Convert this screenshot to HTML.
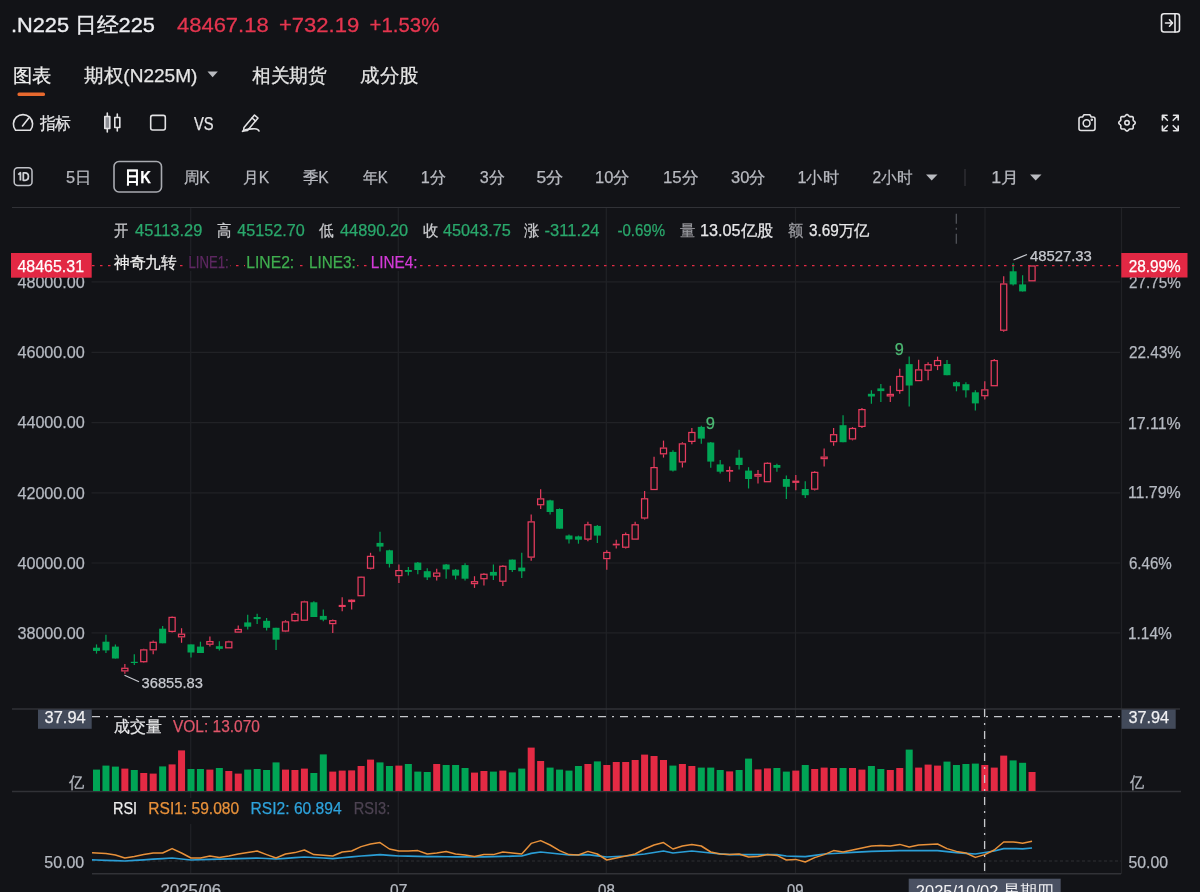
<!DOCTYPE html><html><head><meta charset="utf-8"><style>html,body{margin:0;padding:0;background:#121317;width:1200px;height:892px;overflow:hidden}svg{display:block;font-family:"Liberation Sans",sans-serif;will-change:transform}</style></head><body>
<svg width="1200" height="892" viewBox="0 0 1200 892">
<rect width="1200" height="892" fill="#121317"/>
<text x="10.93" y="32" font-size="21" fill="#ecedf0" font-weight="normal" textLength="143.99" lengthAdjust="spacingAndGlyphs"  stroke="#ecedf0" stroke-width="0.35">.N225 日经225</text>
<text x="177.00" y="32" font-size="21" fill="#e5354f" font-weight="normal" textLength="91.62" lengthAdjust="spacingAndGlyphs"  stroke="#e5354f" stroke-width="0.3">48467.18</text>
<text x="278.95" y="32" font-size="21" fill="#e5354f" font-weight="normal" textLength="80.33" lengthAdjust="spacingAndGlyphs"  stroke="#e5354f" stroke-width="0.3">+732.19</text>
<text x="369.53" y="32" font-size="21" fill="#e5354f" font-weight="normal" textLength="69.79" lengthAdjust="spacingAndGlyphs"  stroke="#e5354f" stroke-width="0.3">+1.53%</text>
<g fill="none" stroke="#e8e8ea" stroke-width="1.6" stroke-linecap="round" stroke-linejoin="round">
<rect x="1161.5" y="13.8" width="18" height="18.2" rx="2.5"/>
<line x1="1175" y1="14" x2="1175" y2="32"/>
<line x1="1165.5" y1="23" x2="1172" y2="23"/><polyline points="1169.5,19.8 1172.5,23 1169.5,26.2"/>
</g>
<text x="12.58" y="81.5" font-size="18.5" fill="#eeeeee" font-weight="normal" textLength="38.63" lengthAdjust="spacingAndGlyphs" stroke="#eeeeee" stroke-width="0.25" >图表</text>
<text x="84.20" y="81.5" font-size="18.5" fill="#e6e6e6" font-weight="normal" textLength="113.20" lengthAdjust="spacingAndGlyphs" stroke="#e6e6e6" stroke-width="0.25" >期权(N225M)</text>
<polygon points="207.5,71.5 217.8,71.5 212.6,77.3" fill="#b9bbc0"/>
<text x="252.00" y="81.5" font-size="18.5" fill="#e6e6e6" font-weight="normal" textLength="74.90" lengthAdjust="spacingAndGlyphs" stroke="#e6e6e6" stroke-width="0.25" >相关期货</text>
<text x="360.28" y="81.5" font-size="18.5" fill="#e6e6e6" font-weight="normal" textLength="58.35" lengthAdjust="spacingAndGlyphs" stroke="#e6e6e6" stroke-width="0.25" >成分股</text>
<rect x="17.5" y="92.6" width="27.5" height="3.4" rx="1.5" fill="#e8692e"/>
<g fill="none" stroke="#e2e2e4" stroke-width="1.6" stroke-linecap="round" stroke-linejoin="round">
<path d="M15.6,130.3 L30.4,130.3 A9.6,9.6 0 1 0 15.6,130.3 Z"/>
<line x1="22.5" y1="126" x2="28.8" y2="118"/>
<line x1="107.3" y1="113" x2="107.3" y2="132"/><rect x="104.8" y="116.5" width="5" height="12" fill="#8e9096"/>
<line x1="117.3" y1="114" x2="117.3" y2="131"/><rect x="114.8" y="117.5" width="5" height="10" fill="#121317"/>
<rect x="150.7" y="115.4" width="14.6" height="14.6" rx="2"/>
<path d="M244,127.5 L254.5,115 L258,118 L247.5,130.5 L243.5,131 Z"/><line x1="252" y1="118" x2="255.5" y2="121"/>
<path d="M242.5,131.3 C246,128.5 251,129 254,128.8 C257,128.6 258.5,129.8 259,131"/>
</g>
<text x="39.50" y="128.8" font-size="16.5" fill="#e6e6e8" font-weight="normal" textLength="31.50" lengthAdjust="spacingAndGlyphs" stroke="#e6e6e8" stroke-width="0.25" >指标</text>
<text x="193.90" y="129.7" font-size="19" fill="#e6e6e8" font-weight="normal" textLength="19.68" lengthAdjust="spacingAndGlyphs" stroke="#e6e6e8" stroke-width="0.25" >VS</text>
<g fill="none" stroke="#e2e2e4" stroke-width="1.6" stroke-linecap="round" stroke-linejoin="round">
<path d="M1079,119 Q1079,117 1081,117 L1082.5,117 L1084,114.8 L1089.8,114.8 L1091.3,117 L1093,117 Q1095,117 1095,119 L1095,128.5 Q1095,130.5 1093,130.5 L1081,130.5 Q1079,130.5 1079,128.5 Z"/>
<circle cx="1086.6" cy="123.2" r="3.4"/>
<circle cx="1091.8" cy="119.8" r="0.5" fill="#e2e2e4"/>
<polygon points="1135.25,122.80 1135.17,123.23 1134.96,123.64 1134.64,124.01 1134.26,124.34 1133.88,124.64 1133.56,124.93 1133.32,125.22 1133.18,125.55 1133.14,125.93 1133.17,126.36 1133.22,126.84 1133.26,127.34 1133.22,127.84 1133.08,128.28 1132.83,128.63 1132.48,128.88 1132.04,129.02 1131.54,129.06 1131.04,129.02 1130.56,128.97 1130.13,128.94 1129.75,128.98 1129.42,129.12 1129.13,129.36 1128.84,129.68 1128.54,130.06 1128.21,130.44 1127.84,130.76 1127.43,130.97 1127.00,131.05 1126.57,130.97 1126.16,130.76 1125.79,130.44 1125.46,130.06 1125.16,129.68 1124.87,129.36 1124.58,129.12 1124.25,128.98 1123.87,128.94 1123.44,128.97 1122.96,129.02 1122.46,129.06 1121.96,129.02 1121.52,128.88 1121.17,128.63 1120.92,128.28 1120.78,127.84 1120.74,127.34 1120.78,126.84 1120.83,126.36 1120.86,125.93 1120.82,125.55 1120.68,125.22 1120.44,124.93 1120.12,124.64 1119.74,124.34 1119.36,124.01 1119.04,123.64 1118.83,123.23 1118.75,122.80 1118.83,122.37 1119.04,121.96 1119.36,121.59 1119.74,121.26 1120.12,120.96 1120.44,120.67 1120.68,120.38 1120.82,120.05 1120.86,119.67 1120.83,119.24 1120.78,118.76 1120.74,118.26 1120.78,117.76 1120.92,117.32 1121.17,116.97 1121.52,116.72 1121.96,116.58 1122.46,116.54 1122.96,116.58 1123.44,116.63 1123.87,116.66 1124.25,116.62 1124.58,116.48 1124.87,116.24 1125.16,115.92 1125.46,115.54 1125.79,115.16 1126.16,114.84 1126.57,114.63 1127.00,114.55 1127.43,114.63 1127.84,114.84 1128.21,115.16 1128.54,115.54 1128.84,115.92 1129.13,116.24 1129.42,116.48 1129.75,116.62 1130.13,116.66 1130.56,116.63 1131.04,116.58 1131.54,116.54 1132.04,116.58 1132.48,116.72 1132.83,116.97 1133.08,117.32 1133.22,117.76 1133.26,118.26 1133.22,118.76 1133.17,119.24 1133.14,119.67 1133.18,120.05 1133.32,120.38 1133.56,120.67 1133.88,120.96 1134.26,121.26 1134.64,121.59 1134.96,121.96 1135.17,122.37 1135.25,122.80"/>
<circle cx="1127" cy="122.8" r="2.2"/>
<path d="M1162.4,115.3 L1167.4,120.3 M1162.4,115.3 L1162.4,120 M1162.4,115.3 L1167.1,115.3"/>
<path d="M1178.2,115.3 L1173.2,120.3 M1178.2,115.3 L1178.2,120 M1178.2,115.3 L1173.5,115.3"/>
<path d="M1162.4,130.7 L1167.4,125.7 M1162.4,130.7 L1162.4,126 M1162.4,130.7 L1167.1,130.7"/>
<path d="M1178.2,130.7 L1173.2,125.7 M1178.2,130.7 L1178.2,126 M1178.2,130.7 L1173.5,130.7"/>
</g>
<rect x="14.2" y="167.8" width="17.8" height="17.8" rx="3.5" fill="none" stroke="#c0c2c8" stroke-width="1.5"/>
<g fill="none" stroke="#cfd1d6" stroke-width="1.8" stroke-linejoin="round"><path d="M18.2,174.6 L20.4,172.8 L20.4,180.4"/><path d="M23.3,172.9 L25.1,172.9 Q28.4,172.9 28.4,176.6 Q28.4,180.3 25.1,180.3 L23.3,180.3 Z"/></g>
<text x="65.98" y="182.6" font-size="16" fill="#b8bac0" font-weight="normal" textLength="25.47" lengthAdjust="spacingAndGlyphs" stroke="#b8bac0" stroke-width="0.25" >5日</text>
<text x="183.52" y="182.6" font-size="16" fill="#b8bac0" font-weight="normal" textLength="26.16" lengthAdjust="spacingAndGlyphs" stroke="#b8bac0" stroke-width="0.25" >周K</text>
<text x="243.02" y="182.6" font-size="16" fill="#b8bac0" font-weight="normal" textLength="26.16" lengthAdjust="spacingAndGlyphs" stroke="#b8bac0" stroke-width="0.25" >月K</text>
<text x="302.70" y="182.6" font-size="16" fill="#b8bac0" font-weight="normal" textLength="25.98" lengthAdjust="spacingAndGlyphs" stroke="#b8bac0" stroke-width="0.25" >季K</text>
<text x="362.70" y="182.6" font-size="16" fill="#b8bac0" font-weight="normal" textLength="24.99" lengthAdjust="spacingAndGlyphs" stroke="#b8bac0" stroke-width="0.25" >年K</text>
<text x="420.69" y="182.6" font-size="16" fill="#b8bac0" font-weight="normal" textLength="25.23" lengthAdjust="spacingAndGlyphs" stroke="#b8bac0" stroke-width="0.25" >1分</text>
<text x="479.80" y="182.6" font-size="16" fill="#b8bac0" font-weight="normal" textLength="25.11" lengthAdjust="spacingAndGlyphs" stroke="#b8bac0" stroke-width="0.25" >3分</text>
<text x="536.61" y="182.6" font-size="16" fill="#b8bac0" font-weight="normal" textLength="27.07" lengthAdjust="spacingAndGlyphs" stroke="#b8bac0" stroke-width="0.25" >5分</text>
<text x="594.97" y="182.6" font-size="16" fill="#b8bac0" font-weight="normal" textLength="34.85" lengthAdjust="spacingAndGlyphs" stroke="#b8bac0" stroke-width="0.25" >10分</text>
<text x="662.95" y="182.6" font-size="16" fill="#b8bac0" font-weight="normal" textLength="35.38" lengthAdjust="spacingAndGlyphs" stroke="#b8bac0" stroke-width="0.25" >15分</text>
<text x="731.00" y="182.6" font-size="16" fill="#b8bac0" font-weight="normal" textLength="34.82" lengthAdjust="spacingAndGlyphs" stroke="#b8bac0" stroke-width="0.25" >30分</text>
<text x="797.49" y="182.6" font-size="16" fill="#b8bac0" font-weight="normal" textLength="41.42" lengthAdjust="spacingAndGlyphs" stroke="#b8bac0" stroke-width="0.25" >1小时</text>
<text x="872.50" y="182.6" font-size="16" fill="#b8bac0" font-weight="normal" textLength="39.91" lengthAdjust="spacingAndGlyphs" stroke="#b8bac0" stroke-width="0.25" >2小时</text>
<text x="991.38" y="182.6" font-size="16" fill="#b8bac0" font-weight="normal" textLength="27.87" lengthAdjust="spacingAndGlyphs" stroke="#b8bac0" stroke-width="0.25" >1月</text>
<rect x="114" y="161.5" width="47.5" height="30.5" rx="5" fill="none" stroke="#a9abb1" stroke-width="1.6"/>
<text x="125.22" y="183" font-size="16.5" fill="#ffffff" font-weight="bold" textLength="25.71" lengthAdjust="spacingAndGlyphs" stroke="#ffffff" stroke-width="0.25" >日K</text>
<polygon points="926,174.5 937.5,174.5 931.7,180.5" fill="#b9bbc0"/>
<polygon points="1030,174.5 1041.5,174.5 1035.7,180.5" fill="#b9bbc0"/>
<line x1="965" y1="169" x2="965" y2="186" stroke="#3a3b40" stroke-width="1"/>
<line x1="12" y1="207.5" x2="1180" y2="207.5" stroke="#313237" stroke-width="1.2"/>
<line x1="91.5" y1="281.8" x2="1120" y2="281.8" stroke="#212226" stroke-width="1.2"/>
<line x1="91.5" y1="352.4" x2="1120" y2="352.4" stroke="#212226" stroke-width="1.2"/>
<line x1="91.5" y1="422.6" x2="1120" y2="422.6" stroke="#212226" stroke-width="1.2"/>
<line x1="91.5" y1="492.8" x2="1120" y2="492.8" stroke="#212226" stroke-width="1.2"/>
<line x1="91.5" y1="563" x2="1120" y2="563" stroke="#212226" stroke-width="1.2"/>
<line x1="91.5" y1="632.9" x2="1120" y2="632.9" stroke="#212226" stroke-width="1.2"/>
<line x1="190.7" y1="208" x2="190.7" y2="874" stroke="#212226" stroke-width="1.2"/>
<line x1="398.3" y1="208" x2="398.3" y2="874" stroke="#212226" stroke-width="1.2"/>
<line x1="606.3" y1="208" x2="606.3" y2="874" stroke="#212226" stroke-width="1.2"/>
<line x1="795.5" y1="208" x2="795.5" y2="874" stroke="#212226" stroke-width="1.2"/>
<line x1="985" y1="208" x2="985" y2="874" stroke="#212226" stroke-width="1.2"/>
<line x1="1121.5" y1="208" x2="1121.5" y2="874" stroke="#212226" stroke-width="1.2"/>
<line x1="12" y1="709" x2="1180" y2="709" stroke="#313237" stroke-width="1.5"/>
<line x1="12" y1="791.5" x2="1181" y2="791.5" stroke="#313237" stroke-width="1.5"/>
<line x1="92" y1="873.8" x2="1121" y2="873.8" stroke="#313237" stroke-width="1.5"/>
<text x="17.40" y="288" font-size="16" fill="#b5b9c1" font-weight="normal" textLength="67.44" lengthAdjust="spacingAndGlyphs" stroke="#b5b9c1" stroke-width="0.25" >48000.00</text>
<text x="17.40" y="358.1" font-size="16" fill="#b5b9c1" font-weight="normal" textLength="67.44" lengthAdjust="spacingAndGlyphs" stroke="#b5b9c1" stroke-width="0.25" >46000.00</text>
<text x="17.40" y="428.3" font-size="16" fill="#b5b9c1" font-weight="normal" textLength="67.44" lengthAdjust="spacingAndGlyphs" stroke="#b5b9c1" stroke-width="0.25" >44000.00</text>
<text x="17.40" y="498.6" font-size="16" fill="#b5b9c1" font-weight="normal" textLength="67.44" lengthAdjust="spacingAndGlyphs" stroke="#b5b9c1" stroke-width="0.25" >42000.00</text>
<text x="17.40" y="569" font-size="16" fill="#b5b9c1" font-weight="normal" textLength="67.44" lengthAdjust="spacingAndGlyphs" stroke="#b5b9c1" stroke-width="0.25" >40000.00</text>
<text x="17.40" y="639.1" font-size="16" fill="#b5b9c1" font-weight="normal" textLength="67.44" lengthAdjust="spacingAndGlyphs" stroke="#b5b9c1" stroke-width="0.25" >38000.00</text>
<text x="1128.90" y="288" font-size="16" fill="#b5b9c1" font-weight="normal" textLength="51.85" lengthAdjust="spacingAndGlyphs" stroke="#b5b9c1" stroke-width="0.25" >27.75%</text>
<text x="1128.90" y="358.3" font-size="16" fill="#b5b9c1" font-weight="normal" textLength="52.05" lengthAdjust="spacingAndGlyphs" stroke="#b5b9c1" stroke-width="0.25" >22.43%</text>
<text x="1127.90" y="429" font-size="16" fill="#b5b9c1" font-weight="normal" textLength="52.87" lengthAdjust="spacingAndGlyphs" stroke="#b5b9c1" stroke-width="0.25" >17.11%</text>
<text x="1127.90" y="498.3" font-size="16" fill="#b5b9c1" font-weight="normal" textLength="52.87" lengthAdjust="spacingAndGlyphs" stroke="#b5b9c1" stroke-width="0.25" >11.79%</text>
<text x="1128.90" y="568.6" font-size="16" fill="#b5b9c1" font-weight="normal" textLength="42.95" lengthAdjust="spacingAndGlyphs" stroke="#b5b9c1" stroke-width="0.25" >6.46%</text>
<text x="1127.93" y="639" font-size="16" fill="#b5b9c1" font-weight="normal" textLength="43.93" lengthAdjust="spacingAndGlyphs" stroke="#b5b9c1" stroke-width="0.25" >1.14%</text>
<line x1="96.50" y1="644.4" x2="96.50" y2="653.6" stroke="#00a555" stroke-width="1.2"/>
<rect x="93.00" y="647.7" width="7" height="3.20" fill="#00a555"/>
<line x1="105.95" y1="634.7" x2="105.95" y2="653.0" stroke="#00a555" stroke-width="1.2"/>
<rect x="102.45" y="641.7" width="7" height="8.70" fill="#00a555"/>
<line x1="115.40" y1="644.4" x2="115.40" y2="658.5" stroke="#00a555" stroke-width="1.2"/>
<rect x="111.90" y="646.6" width="7" height="11.90" fill="#00a555"/>
<line x1="124.85" y1="663.9" x2="124.85" y2="667.7" stroke="#e63c5e" stroke-width="1.2"/>
<line x1="124.85" y1="671.5" x2="124.85" y2="673.7" stroke="#e63c5e" stroke-width="1.2"/>
<rect x="121.80" y="668.30" width="6.1" height="2.60" fill="none" stroke="#e63c5e" stroke-width="1.25"/>
<line x1="134.30" y1="654.2" x2="134.30" y2="665.0" stroke="#00a555" stroke-width="1.2"/>
<rect x="130.80" y="661.8" width="7" height="1.20" fill="#00a555"/>
<line x1="143.75" y1="648.8" x2="143.75" y2="649.3" stroke="#e63c5e" stroke-width="1.2"/>
<line x1="143.75" y1="662.3" x2="143.75" y2="662.8" stroke="#e63c5e" stroke-width="1.2"/>
<rect x="140.70" y="649.90" width="6.1" height="11.80" fill="none" stroke="#e63c5e" stroke-width="1.25"/>
<line x1="153.20" y1="640.6" x2="153.20" y2="641.7" stroke="#e63c5e" stroke-width="1.2"/>
<line x1="153.20" y1="650.4" x2="153.20" y2="654.2" stroke="#e63c5e" stroke-width="1.2"/>
<rect x="150.15" y="642.30" width="6.1" height="7.50" fill="none" stroke="#e63c5e" stroke-width="1.25"/>
<line x1="162.65" y1="626.0" x2="162.65" y2="643.3" stroke="#00a555" stroke-width="1.2"/>
<rect x="159.15" y="628.7" width="7" height="14.60" fill="#00a555"/>
<line x1="172.10" y1="616.3" x2="172.10" y2="616.8" stroke="#e63c5e" stroke-width="1.2"/>
<line x1="172.10" y1="632.0" x2="172.10" y2="632.5" stroke="#e63c5e" stroke-width="1.2"/>
<rect x="169.05" y="617.40" width="6.1" height="14.00" fill="none" stroke="#e63c5e" stroke-width="1.25"/>
<line x1="181.55" y1="628.2" x2="181.55" y2="633.6" stroke="#e63c5e" stroke-width="1.2"/>
<line x1="181.55" y1="637.4" x2="181.55" y2="642.8" stroke="#e63c5e" stroke-width="1.2"/>
<rect x="178.50" y="634.20" width="6.1" height="2.60" fill="none" stroke="#e63c5e" stroke-width="1.25"/>
<line x1="191.00" y1="644.4" x2="191.00" y2="657.4" stroke="#00a555" stroke-width="1.2"/>
<rect x="187.50" y="644.4" width="7" height="8.10" fill="#00a555"/>
<line x1="200.45" y1="641.7" x2="200.45" y2="653.0" stroke="#00a555" stroke-width="1.2"/>
<rect x="196.95" y="646.6" width="7" height="6.40" fill="#00a555"/>
<line x1="209.90" y1="636.6" x2="209.90" y2="641.0" stroke="#e63c5e" stroke-width="1.2"/>
<line x1="209.90" y1="644.8" x2="209.90" y2="646.4" stroke="#e63c5e" stroke-width="1.2"/>
<rect x="206.85" y="641.60" width="6.1" height="2.60" fill="none" stroke="#e63c5e" stroke-width="1.25"/>
<line x1="219.35" y1="641.3" x2="219.35" y2="650.5" stroke="#00a555" stroke-width="1.2"/>
<rect x="215.85" y="646.2" width="7" height="2.70" fill="#00a555"/>
<line x1="228.80" y1="640.8" x2="228.80" y2="641.3" stroke="#e63c5e" stroke-width="1.2"/>
<rect x="225.75" y="641.90" width="6.1" height="5.90" fill="none" stroke="#e63c5e" stroke-width="1.25"/>
<line x1="238.25" y1="625.6" x2="238.25" y2="628.9" stroke="#e63c5e" stroke-width="1.2"/>
<rect x="235.20" y="629.50" width="6.1" height="2.60" fill="none" stroke="#e63c5e" stroke-width="1.25"/>
<line x1="247.70" y1="614.8" x2="247.70" y2="629.4" stroke="#00a555" stroke-width="1.2"/>
<rect x="244.20" y="622.4" width="7" height="4.30" fill="#00a555"/>
<line x1="257.15" y1="613.7" x2="257.15" y2="624.0" stroke="#00a555" stroke-width="1.2"/>
<rect x="253.65" y="617.0" width="7" height="2.10" fill="#00a555"/>
<line x1="266.60" y1="618.0" x2="266.60" y2="630.5" stroke="#00a555" stroke-width="1.2"/>
<rect x="263.10" y="620.8" width="7" height="7.00" fill="#00a555"/>
<line x1="276.05" y1="627.8" x2="276.05" y2="650.0" stroke="#00a555" stroke-width="1.2"/>
<rect x="272.55" y="627.8" width="7" height="11.90" fill="#00a555"/>
<line x1="285.50" y1="620.2" x2="285.50" y2="621.3" stroke="#e63c5e" stroke-width="1.2"/>
<line x1="285.50" y1="631.6" x2="285.50" y2="632.1" stroke="#e63c5e" stroke-width="1.2"/>
<rect x="282.45" y="621.90" width="6.1" height="9.10" fill="none" stroke="#e63c5e" stroke-width="1.25"/>
<line x1="294.95" y1="612.1" x2="294.95" y2="613.7" stroke="#e63c5e" stroke-width="1.2"/>
<line x1="294.95" y1="621.3" x2="294.95" y2="621.8" stroke="#e63c5e" stroke-width="1.2"/>
<rect x="291.90" y="614.30" width="6.1" height="6.40" fill="none" stroke="#e63c5e" stroke-width="1.25"/>
<line x1="304.40" y1="600.7" x2="304.40" y2="601.3" stroke="#e63c5e" stroke-width="1.2"/>
<rect x="301.35" y="601.90" width="6.1" height="18.30" fill="none" stroke="#e63c5e" stroke-width="1.25"/>
<line x1="313.85" y1="601.3" x2="313.85" y2="617.0" stroke="#00a555" stroke-width="1.2"/>
<rect x="310.35" y="602.3" width="7" height="14.70" fill="#00a555"/>
<line x1="323.30" y1="609.4" x2="323.30" y2="621.3" stroke="#00a555" stroke-width="1.2"/>
<rect x="319.80" y="615.9" width="7" height="3.80" fill="#00a555"/>
<line x1="332.75" y1="619.5" x2="332.75" y2="620.1" stroke="#e63c5e" stroke-width="1.2"/>
<line x1="332.75" y1="624.2" x2="332.75" y2="633.0" stroke="#e63c5e" stroke-width="1.2"/>
<rect x="329.70" y="620.70" width="6.1" height="2.90" fill="none" stroke="#e63c5e" stroke-width="1.25"/>
<line x1="342.20" y1="597.2" x2="342.20" y2="604.9" stroke="#e63c5e" stroke-width="1.2"/>
<line x1="342.20" y1="607.0" x2="342.20" y2="611.3" stroke="#e63c5e" stroke-width="1.2"/>
<rect x="338.70" y="604.9" width="7" height="2.10" fill="#e63c5e"/>
<line x1="351.65" y1="599.0" x2="351.65" y2="599.6" stroke="#e63c5e" stroke-width="1.2"/>
<line x1="351.65" y1="602.1" x2="351.65" y2="609.5" stroke="#e63c5e" stroke-width="1.2"/>
<rect x="348.15" y="599.6" width="7" height="2.50" fill="#e63c5e"/>
<line x1="361.10" y1="576.2" x2="361.10" y2="576.6" stroke="#e63c5e" stroke-width="1.2"/>
<rect x="358.05" y="577.20" width="6.1" height="18.50" fill="none" stroke="#e63c5e" stroke-width="1.25"/>
<line x1="370.55" y1="552.8" x2="370.55" y2="555.8" stroke="#e63c5e" stroke-width="1.2"/>
<line x1="370.55" y1="568.8" x2="370.55" y2="569.4" stroke="#e63c5e" stroke-width="1.2"/>
<rect x="367.50" y="556.40" width="6.1" height="11.80" fill="none" stroke="#e63c5e" stroke-width="1.25"/>
<line x1="380.00" y1="531.8" x2="380.00" y2="551.5" stroke="#00a555" stroke-width="1.2"/>
<rect x="376.50" y="542.9" width="7" height="3.70" fill="#00a555"/>
<line x1="389.45" y1="549.7" x2="389.45" y2="567.5" stroke="#00a555" stroke-width="1.2"/>
<rect x="385.95" y="550.3" width="7" height="13.60" fill="#00a555"/>
<line x1="398.90" y1="564.5" x2="398.90" y2="570.0" stroke="#e63c5e" stroke-width="1.2"/>
<line x1="398.90" y1="576.2" x2="398.90" y2="583.0" stroke="#e63c5e" stroke-width="1.2"/>
<rect x="395.85" y="570.60" width="6.1" height="5.00" fill="none" stroke="#e63c5e" stroke-width="1.25"/>
<line x1="408.35" y1="567.0" x2="408.35" y2="575.6" stroke="#00a555" stroke-width="1.2"/>
<rect x="404.85" y="570.0" width="7" height="1.90" fill="#00a555"/>
<line x1="417.80" y1="562.0" x2="417.80" y2="574.3" stroke="#00a555" stroke-width="1.2"/>
<rect x="414.30" y="562.6" width="7" height="7.40" fill="#00a555"/>
<line x1="427.25" y1="568.2" x2="427.25" y2="579.9" stroke="#00a555" stroke-width="1.2"/>
<rect x="423.75" y="571.2" width="7" height="6.20" fill="#00a555"/>
<line x1="436.70" y1="568.8" x2="436.70" y2="572.5" stroke="#e63c5e" stroke-width="1.2"/>
<line x1="436.70" y1="576.8" x2="436.70" y2="580.5" stroke="#e63c5e" stroke-width="1.2"/>
<rect x="433.65" y="573.10" width="6.1" height="3.10" fill="none" stroke="#e63c5e" stroke-width="1.25"/>
<line x1="446.15" y1="563.9" x2="446.15" y2="578.7" stroke="#00a555" stroke-width="1.2"/>
<rect x="442.65" y="564.5" width="7" height="4.90" fill="#00a555"/>
<line x1="455.60" y1="569.0" x2="455.60" y2="579.6" stroke="#00a555" stroke-width="1.2"/>
<rect x="452.10" y="569.7" width="7" height="5.90" fill="#00a555"/>
<line x1="465.05" y1="563.3" x2="465.05" y2="580.5" stroke="#00a555" stroke-width="1.2"/>
<rect x="461.55" y="565.1" width="7" height="13.60" fill="#00a555"/>
<line x1="474.50" y1="576.2" x2="474.50" y2="581.1" stroke="#e63c5e" stroke-width="1.2"/>
<line x1="474.50" y1="584.2" x2="474.50" y2="587.9" stroke="#e63c5e" stroke-width="1.2"/>
<rect x="471.45" y="581.70" width="6.1" height="1.90" fill="none" stroke="#e63c5e" stroke-width="1.25"/>
<line x1="483.95" y1="573.1" x2="483.95" y2="573.7" stroke="#e63c5e" stroke-width="1.2"/>
<line x1="483.95" y1="579.3" x2="483.95" y2="585.4" stroke="#e63c5e" stroke-width="1.2"/>
<rect x="480.90" y="574.30" width="6.1" height="4.40" fill="none" stroke="#e63c5e" stroke-width="1.25"/>
<line x1="493.40" y1="564.5" x2="493.40" y2="579.9" stroke="#00a555" stroke-width="1.2"/>
<rect x="489.90" y="571.9" width="7" height="3.70" fill="#00a555"/>
<line x1="502.85" y1="565.1" x2="502.85" y2="565.7" stroke="#e63c5e" stroke-width="1.2"/>
<line x1="502.85" y1="581.8" x2="502.85" y2="586.1" stroke="#e63c5e" stroke-width="1.2"/>
<rect x="499.80" y="566.30" width="6.1" height="14.90" fill="none" stroke="#e63c5e" stroke-width="1.25"/>
<line x1="512.30" y1="559.6" x2="512.30" y2="571.9" stroke="#00a555" stroke-width="1.2"/>
<rect x="508.80" y="559.6" width="7" height="10.40" fill="#00a555"/>
<line x1="521.75" y1="552.8" x2="521.75" y2="578.0" stroke="#00a555" stroke-width="1.2"/>
<rect x="518.25" y="567.6" width="7" height="3.70" fill="#00a555"/>
<line x1="531.20" y1="514.5" x2="531.20" y2="521.3" stroke="#e63c5e" stroke-width="1.2"/>
<line x1="531.20" y1="557.7" x2="531.20" y2="560.8" stroke="#e63c5e" stroke-width="1.2"/>
<rect x="528.15" y="521.90" width="6.1" height="35.20" fill="none" stroke="#e63c5e" stroke-width="1.25"/>
<line x1="540.65" y1="489.2" x2="540.65" y2="498.3" stroke="#e63c5e" stroke-width="1.2"/>
<line x1="540.65" y1="505.3" x2="540.65" y2="509.0" stroke="#e63c5e" stroke-width="1.2"/>
<rect x="537.60" y="498.90" width="6.1" height="5.80" fill="none" stroke="#e63c5e" stroke-width="1.25"/>
<line x1="550.10" y1="499.7" x2="550.10" y2="514.5" stroke="#00a555" stroke-width="1.2"/>
<rect x="546.60" y="500.4" width="7" height="11.60" fill="#00a555"/>
<line x1="559.55" y1="508.4" x2="559.55" y2="528.7" stroke="#00a555" stroke-width="1.2"/>
<rect x="556.05" y="509.0" width="7" height="19.70" fill="#00a555"/>
<line x1="569.00" y1="534.5" x2="569.00" y2="543.6" stroke="#00a555" stroke-width="1.2"/>
<rect x="565.50" y="535.5" width="7" height="3.90" fill="#00a555"/>
<line x1="578.45" y1="535.6" x2="578.45" y2="543.7" stroke="#00a555" stroke-width="1.2"/>
<rect x="574.95" y="536.4" width="7" height="3.30" fill="#00a555"/>
<line x1="587.90" y1="521.8" x2="587.90" y2="524.2" stroke="#e63c5e" stroke-width="1.2"/>
<line x1="587.90" y1="539.7" x2="587.90" y2="541.3" stroke="#e63c5e" stroke-width="1.2"/>
<rect x="584.85" y="524.80" width="6.1" height="14.30" fill="none" stroke="#e63c5e" stroke-width="1.25"/>
<line x1="597.35" y1="525.0" x2="597.35" y2="543.0" stroke="#00a555" stroke-width="1.2"/>
<rect x="593.85" y="525.9" width="7" height="9.70" fill="#00a555"/>
<line x1="606.80" y1="550.2" x2="606.80" y2="551.9" stroke="#e63c5e" stroke-width="1.2"/>
<line x1="606.80" y1="559.2" x2="606.80" y2="569.7" stroke="#e63c5e" stroke-width="1.2"/>
<rect x="603.75" y="552.50" width="6.1" height="6.10" fill="none" stroke="#e63c5e" stroke-width="1.25"/>
<line x1="616.25" y1="539.7" x2="616.25" y2="543.7" stroke="#e63c5e" stroke-width="1.2"/>
<line x1="616.25" y1="545.4" x2="616.25" y2="548.6" stroke="#e63c5e" stroke-width="1.2"/>
<rect x="612.75" y="543.7" width="7" height="1.70" fill="#e63c5e"/>
<line x1="625.70" y1="532.4" x2="625.70" y2="534.0" stroke="#e63c5e" stroke-width="1.2"/>
<line x1="625.70" y1="547.8" x2="625.70" y2="548.6" stroke="#e63c5e" stroke-width="1.2"/>
<rect x="622.65" y="534.60" width="6.1" height="12.60" fill="none" stroke="#e63c5e" stroke-width="1.25"/>
<line x1="635.15" y1="521.8" x2="635.15" y2="524.2" stroke="#e63c5e" stroke-width="1.2"/>
<rect x="632.10" y="524.80" width="6.1" height="14.30" fill="none" stroke="#e63c5e" stroke-width="1.25"/>
<line x1="644.60" y1="490.9" x2="644.60" y2="498.2" stroke="#e63c5e" stroke-width="1.2"/>
<line x1="644.60" y1="518.6" x2="644.60" y2="519.4" stroke="#e63c5e" stroke-width="1.2"/>
<rect x="641.55" y="498.80" width="6.1" height="19.20" fill="none" stroke="#e63c5e" stroke-width="1.25"/>
<line x1="654.05" y1="456.8" x2="654.05" y2="467.0" stroke="#e63c5e" stroke-width="1.2"/>
<rect x="651.00" y="467.60" width="6.1" height="21.90" fill="none" stroke="#e63c5e" stroke-width="1.25"/>
<line x1="663.50" y1="440.6" x2="663.50" y2="447.5" stroke="#e63c5e" stroke-width="1.2"/>
<line x1="663.50" y1="454.4" x2="663.50" y2="457.6" stroke="#e63c5e" stroke-width="1.2"/>
<rect x="660.45" y="448.10" width="6.1" height="5.70" fill="none" stroke="#e63c5e" stroke-width="1.25"/>
<line x1="672.95" y1="450.3" x2="672.95" y2="471.4" stroke="#00a555" stroke-width="1.2"/>
<rect x="669.45" y="451.9" width="7" height="18.70" fill="#00a555"/>
<line x1="682.40" y1="442.2" x2="682.40" y2="443.3" stroke="#e63c5e" stroke-width="1.2"/>
<line x1="682.40" y1="462.5" x2="682.40" y2="467.4" stroke="#e63c5e" stroke-width="1.2"/>
<rect x="679.35" y="443.90" width="6.1" height="18.00" fill="none" stroke="#e63c5e" stroke-width="1.25"/>
<line x1="691.85" y1="428.0" x2="691.85" y2="431.9" stroke="#e63c5e" stroke-width="1.2"/>
<line x1="691.85" y1="442.0" x2="691.85" y2="444.2" stroke="#e63c5e" stroke-width="1.2"/>
<rect x="688.80" y="432.50" width="6.1" height="8.90" fill="none" stroke="#e63c5e" stroke-width="1.25"/>
<line x1="701.30" y1="425.7" x2="701.30" y2="443.7" stroke="#00a555" stroke-width="1.2"/>
<rect x="697.80" y="426.9" width="7" height="11.70" fill="#00a555"/>
<line x1="710.75" y1="442.0" x2="710.75" y2="467.8" stroke="#00a555" stroke-width="1.2"/>
<rect x="707.25" y="442.5" width="7" height="19.10" fill="#00a555"/>
<line x1="720.20" y1="459.9" x2="720.20" y2="473.4" stroke="#00a555" stroke-width="1.2"/>
<rect x="716.70" y="464.4" width="7" height="7.30" fill="#00a555"/>
<line x1="729.65" y1="466.6" x2="729.65" y2="470.0" stroke="#e63c5e" stroke-width="1.2"/>
<line x1="729.65" y1="471.7" x2="729.65" y2="481.8" stroke="#e63c5e" stroke-width="1.2"/>
<rect x="726.15" y="470.0" width="7" height="1.70" fill="#e63c5e"/>
<line x1="739.10" y1="449.8" x2="739.10" y2="469.4" stroke="#00a555" stroke-width="1.2"/>
<rect x="735.60" y="457.7" width="7" height="7.30" fill="#00a555"/>
<line x1="748.55" y1="467.2" x2="748.55" y2="488.5" stroke="#00a555" stroke-width="1.2"/>
<rect x="745.05" y="470.6" width="7" height="8.40" fill="#00a555"/>
<line x1="758.00" y1="470.0" x2="758.00" y2="473.9" stroke="#e63c5e" stroke-width="1.2"/>
<line x1="758.00" y1="476.7" x2="758.00" y2="483.4" stroke="#e63c5e" stroke-width="1.2"/>
<rect x="754.95" y="474.50" width="6.1" height="1.60" fill="none" stroke="#e63c5e" stroke-width="1.25"/>
<line x1="767.45" y1="462.2" x2="767.45" y2="462.7" stroke="#e63c5e" stroke-width="1.2"/>
<rect x="764.40" y="463.30" width="6.1" height="18.40" fill="none" stroke="#e63c5e" stroke-width="1.25"/>
<line x1="776.90" y1="463.8" x2="776.90" y2="471.7" stroke="#00a555" stroke-width="1.2"/>
<rect x="773.40" y="465.0" width="7" height="2.80" fill="#00a555"/>
<line x1="786.35" y1="475.6" x2="786.35" y2="499.1" stroke="#00a555" stroke-width="1.2"/>
<rect x="782.85" y="479.0" width="7" height="7.80" fill="#00a555"/>
<line x1="795.80" y1="475.0" x2="795.80" y2="480.6" stroke="#e63c5e" stroke-width="1.2"/>
<line x1="795.80" y1="482.9" x2="795.80" y2="490.2" stroke="#e63c5e" stroke-width="1.2"/>
<rect x="792.30" y="480.6" width="7" height="2.30" fill="#e63c5e"/>
<line x1="805.25" y1="481.2" x2="805.25" y2="498.0" stroke="#00a555" stroke-width="1.2"/>
<rect x="801.75" y="489.0" width="7" height="6.20" fill="#00a555"/>
<line x1="814.70" y1="470.9" x2="814.70" y2="471.8" stroke="#e63c5e" stroke-width="1.2"/>
<line x1="814.70" y1="489.7" x2="814.70" y2="490.6" stroke="#e63c5e" stroke-width="1.2"/>
<rect x="811.65" y="472.40" width="6.1" height="16.70" fill="none" stroke="#e63c5e" stroke-width="1.25"/>
<line x1="824.15" y1="448.5" x2="824.15" y2="456.5" stroke="#e63c5e" stroke-width="1.2"/>
<line x1="824.15" y1="459.2" x2="824.15" y2="466.4" stroke="#e63c5e" stroke-width="1.2"/>
<rect x="821.10" y="457.10" width="6.1" height="1.50" fill="none" stroke="#e63c5e" stroke-width="1.25"/>
<line x1="833.60" y1="427.9" x2="833.60" y2="434.1" stroke="#e63c5e" stroke-width="1.2"/>
<line x1="833.60" y1="442.2" x2="833.60" y2="445.8" stroke="#e63c5e" stroke-width="1.2"/>
<rect x="830.55" y="434.70" width="6.1" height="6.90" fill="none" stroke="#e63c5e" stroke-width="1.25"/>
<line x1="843.05" y1="415.3" x2="843.05" y2="442.2" stroke="#00a555" stroke-width="1.2"/>
<rect x="839.55" y="425.2" width="7" height="17.00" fill="#00a555"/>
<line x1="852.50" y1="427.0" x2="852.50" y2="427.9" stroke="#e63c5e" stroke-width="1.2"/>
<line x1="852.50" y1="439.5" x2="852.50" y2="440.4" stroke="#e63c5e" stroke-width="1.2"/>
<rect x="849.45" y="428.50" width="6.1" height="10.40" fill="none" stroke="#e63c5e" stroke-width="1.25"/>
<line x1="861.95" y1="408.1" x2="861.95" y2="409.0" stroke="#e63c5e" stroke-width="1.2"/>
<line x1="861.95" y1="427.0" x2="861.95" y2="427.9" stroke="#e63c5e" stroke-width="1.2"/>
<rect x="858.90" y="409.60" width="6.1" height="16.80" fill="none" stroke="#e63c5e" stroke-width="1.25"/>
<line x1="871.40" y1="390.2" x2="871.40" y2="403.7" stroke="#00a555" stroke-width="1.2"/>
<rect x="867.90" y="393.8" width="7" height="2.70" fill="#00a555"/>
<line x1="880.85" y1="383.9" x2="880.85" y2="401.9" stroke="#00a555" stroke-width="1.2"/>
<rect x="877.35" y="388.4" width="7" height="2.70" fill="#00a555"/>
<line x1="890.30" y1="385.7" x2="890.30" y2="393.8" stroke="#e63c5e" stroke-width="1.2"/>
<line x1="890.30" y1="396.5" x2="890.30" y2="401.9" stroke="#e63c5e" stroke-width="1.2"/>
<rect x="887.25" y="394.40" width="6.1" height="1.50" fill="none" stroke="#e63c5e" stroke-width="1.25"/>
<line x1="899.75" y1="368.7" x2="899.75" y2="375.9" stroke="#e63c5e" stroke-width="1.2"/>
<line x1="899.75" y1="391.1" x2="899.75" y2="393.8" stroke="#e63c5e" stroke-width="1.2"/>
<rect x="896.70" y="376.50" width="6.1" height="14.00" fill="none" stroke="#e63c5e" stroke-width="1.25"/>
<line x1="909.20" y1="356.5" x2="909.20" y2="406.4" stroke="#00a555" stroke-width="1.2"/>
<rect x="905.70" y="364.1" width="7" height="21.40" fill="#00a555"/>
<line x1="918.65" y1="359.8" x2="918.65" y2="369.3" stroke="#e63c5e" stroke-width="1.2"/>
<rect x="915.60" y="369.90" width="6.1" height="10.70" fill="none" stroke="#e63c5e" stroke-width="1.25"/>
<line x1="928.10" y1="362.2" x2="928.10" y2="364.1" stroke="#e63c5e" stroke-width="1.2"/>
<line x1="928.10" y1="370.8" x2="928.10" y2="380.2" stroke="#e63c5e" stroke-width="1.2"/>
<rect x="925.05" y="364.70" width="6.1" height="5.50" fill="none" stroke="#e63c5e" stroke-width="1.25"/>
<line x1="937.55" y1="356.6" x2="937.55" y2="360.0" stroke="#e63c5e" stroke-width="1.2"/>
<line x1="937.55" y1="366.1" x2="937.55" y2="370.1" stroke="#e63c5e" stroke-width="1.2"/>
<rect x="934.50" y="360.60" width="6.1" height="4.90" fill="none" stroke="#e63c5e" stroke-width="1.25"/>
<line x1="947.00" y1="360.0" x2="947.00" y2="375.2" stroke="#00a555" stroke-width="1.2"/>
<rect x="943.50" y="364.0" width="7" height="11.20" fill="#00a555"/>
<line x1="956.45" y1="381.2" x2="956.45" y2="391.3" stroke="#00a555" stroke-width="1.2"/>
<rect x="952.95" y="382.2" width="7" height="4.10" fill="#00a555"/>
<line x1="965.90" y1="382.2" x2="965.90" y2="397.4" stroke="#00a555" stroke-width="1.2"/>
<rect x="962.40" y="384.2" width="7" height="6.10" fill="#00a555"/>
<line x1="975.35" y1="390.3" x2="975.35" y2="410.5" stroke="#00a555" stroke-width="1.2"/>
<rect x="971.85" y="392.3" width="7" height="11.10" fill="#00a555"/>
<line x1="984.80" y1="381.2" x2="984.80" y2="389.3" stroke="#e63c5e" stroke-width="1.2"/>
<line x1="984.80" y1="396.3" x2="984.80" y2="399.4" stroke="#e63c5e" stroke-width="1.2"/>
<rect x="981.75" y="389.90" width="6.1" height="5.80" fill="none" stroke="#e63c5e" stroke-width="1.25"/>
<line x1="994.25" y1="359.0" x2="994.25" y2="360.0" stroke="#e63c5e" stroke-width="1.2"/>
<rect x="991.20" y="360.60" width="6.1" height="25.10" fill="none" stroke="#e63c5e" stroke-width="1.25"/>
<line x1="1003.70" y1="276.3" x2="1003.70" y2="283.4" stroke="#e63c5e" stroke-width="1.2"/>
<line x1="1003.70" y1="330.8" x2="1003.70" y2="331.8" stroke="#e63c5e" stroke-width="1.2"/>
<rect x="1000.65" y="284.00" width="6.1" height="46.20" fill="none" stroke="#e63c5e" stroke-width="1.25"/>
<line x1="1013.15" y1="263.2" x2="1013.15" y2="285.4" stroke="#00a555" stroke-width="1.2"/>
<rect x="1009.65" y="271.3" width="7" height="13.10" fill="#00a555"/>
<line x1="1022.60" y1="275.3" x2="1022.60" y2="291.4" stroke="#00a555" stroke-width="1.2"/>
<rect x="1019.10" y="284.4" width="7" height="7.00" fill="#00a555"/>
<rect x="1029.00" y="266.00" width="6.1" height="14.80" fill="none" stroke="#e63c5e" stroke-width="1.25"/>
<text x="705.70" y="428.5" font-size="16.5" fill="#4dba74" font-weight="normal" textLength="9.19" lengthAdjust="spacingAndGlyphs" stroke="#4dba74" stroke-width="0.25" >9</text>
<text x="894.70" y="355.2" font-size="16.5" fill="#4dba74" font-weight="normal" textLength="9.09" lengthAdjust="spacingAndGlyphs" stroke="#4dba74" stroke-width="0.25" >9</text>
<line x1="1013.5" y1="260" x2="1027" y2="254.5" stroke="#c8cad0" stroke-width="1.2"/>
<text x="1030.00" y="261.25" font-size="15.5" fill="#c8cad0" font-weight="normal" textLength="61.88" lengthAdjust="spacingAndGlyphs" stroke="#c8cad0" stroke-width="0.25" >48527.33</text>
<line x1="124.5" y1="675.3" x2="139" y2="681.8" stroke="#c8cad0" stroke-width="1.2"/>
<text x="141.60" y="688" font-size="15.5" fill="#c8cad0" font-weight="normal" textLength="61.32" lengthAdjust="spacingAndGlyphs" stroke="#c8cad0" stroke-width="0.25" >36855.83</text>
<line x1="92" y1="265.6" x2="1121" y2="265.6" stroke="#e42a44" stroke-width="1.3" stroke-dasharray="2.5 5.5"/>
<rect x="11" y="253" width="80.7" height="24.7" fill="#e22844"/>
<text x="17.50" y="271.7" font-size="16" fill="#ffffff" font-weight="normal" textLength="66.53" lengthAdjust="spacingAndGlyphs" stroke="#ffffff" stroke-width="0.25" >48465.31</text>
<rect x="1121.3" y="253" width="66.2" height="24.5" fill="#e22844"/>
<text x="1128.75" y="272.3" font-size="16" fill="#ffffff" font-weight="normal" textLength="52.00" lengthAdjust="spacingAndGlyphs" stroke="#ffffff" stroke-width="0.25" >28.99%</text>
<text x="114.00" y="235.7" font-size="16" fill="#c9cacd" font-weight="normal" textLength="14.30" lengthAdjust="spacingAndGlyphs" stroke="#c9cacd" stroke-width="0.25" >开</text>
<text x="135.00" y="235.7" font-size="16" fill="#2aa86c" font-weight="normal" textLength="67.26" lengthAdjust="spacingAndGlyphs" stroke="#2aa86c" stroke-width="0.25" >45113.29</text>
<text x="217.30" y="235.7" font-size="16" fill="#c9cacd" font-weight="normal" textLength="14.40" lengthAdjust="spacingAndGlyphs" stroke="#c9cacd" stroke-width="0.25" >高</text>
<text x="237.30" y="235.7" font-size="16" fill="#2aa86c" font-weight="normal" textLength="67.44" lengthAdjust="spacingAndGlyphs" stroke="#2aa86c" stroke-width="0.25" >45152.70</text>
<text x="319.30" y="235.7" font-size="16" fill="#c9cacd" font-weight="normal" textLength="14.70" lengthAdjust="spacingAndGlyphs" stroke="#c9cacd" stroke-width="0.25" >低</text>
<text x="340.00" y="235.7" font-size="16" fill="#2aa86c" font-weight="normal" textLength="68.05" lengthAdjust="spacingAndGlyphs" stroke="#2aa86c" stroke-width="0.25" >44890.20</text>
<text x="422.50" y="235.7" font-size="16" fill="#c9cacd" font-weight="normal" textLength="15.47" lengthAdjust="spacingAndGlyphs" stroke="#c9cacd" stroke-width="0.25" >收</text>
<text x="443.00" y="235.7" font-size="16" fill="#2aa86c" font-weight="normal" textLength="67.75" lengthAdjust="spacingAndGlyphs" stroke="#2aa86c" stroke-width="0.25" >45043.75</text>
<text x="524.30" y="235.7" font-size="16" fill="#c9cacd" font-weight="normal" textLength="15.30" lengthAdjust="spacingAndGlyphs" stroke="#c9cacd" stroke-width="0.25" >涨</text>
<text x="544.60" y="235.7" font-size="16" fill="#2aa86c" font-weight="normal" textLength="54.88" lengthAdjust="spacingAndGlyphs" stroke="#2aa86c" stroke-width="0.25" >-311.24</text>
<text x="617.40" y="235.7" font-size="16" fill="#2aa86c" font-weight="normal" textLength="47.62" lengthAdjust="spacingAndGlyphs" stroke="#2aa86c" stroke-width="0.25" >-0.69%</text>
<text x="679.90" y="235.7" font-size="16" fill="#9a9ba0" font-weight="normal" textLength="15.30" lengthAdjust="spacingAndGlyphs" stroke="#9a9ba0" stroke-width="0.25" >量</text>
<text x="699.99" y="235.7" font-size="16" fill="#e8e8ea" font-weight="normal" textLength="72.97" lengthAdjust="spacingAndGlyphs" stroke="#e8e8ea" stroke-width="0.25" >13.05亿股</text>
<text x="788.00" y="235.7" font-size="16" fill="#9a9ba0" font-weight="normal" textLength="15.30" lengthAdjust="spacingAndGlyphs" stroke="#9a9ba0" stroke-width="0.25" >额</text>
<text x="809.00" y="235.7" font-size="16" fill="#e8e8ea" font-weight="normal" textLength="60.33" lengthAdjust="spacingAndGlyphs" stroke="#e8e8ea" stroke-width="0.25" >3.69万亿</text>
<rect x="112" y="255" width="67" height="16" fill="#121317"/>
<rect x="187" y="255" width="43" height="16" fill="#121317"/>
<rect x="245" y="255" width="50" height="16" fill="#121317"/>
<rect x="308" y="255" width="49" height="16" fill="#121317"/>
<rect x="369" y="255" width="50" height="16" fill="#121317"/>
<text x="114.00" y="268.3" font-size="16" fill="#eeeeee" font-weight="normal" textLength="62.70" lengthAdjust="spacingAndGlyphs" stroke="#eeeeee" stroke-width="0.25" >神奇九转</text>
<text x="188.48" y="268.3" font-size="16" fill="#5e2862" font-weight="normal" textLength="40.28" lengthAdjust="spacingAndGlyphs" stroke="#5e2862" stroke-width="0.25" >LINE1:</text>
<text x="246.32" y="268.3" font-size="16" fill="#3fae4f" font-weight="normal" textLength="47.88" lengthAdjust="spacingAndGlyphs" stroke="#3fae4f" stroke-width="0.25" >LINE2:</text>
<text x="309.04" y="268.3" font-size="16" fill="#3fae4f" font-weight="normal" textLength="46.84" lengthAdjust="spacingAndGlyphs" stroke="#3fae4f" stroke-width="0.25" >LINE3:</text>
<text x="370.74" y="268.3" font-size="16" fill="#d43ad8" font-weight="normal" textLength="46.84" lengthAdjust="spacingAndGlyphs" stroke="#d43ad8" stroke-width="0.25" >LINE4:</text>
<line x1="956.3" y1="213.8" x2="956.3" y2="246.3" stroke="#55575d" stroke-width="1.2" stroke-dasharray="10 4 2 4"/>
<line x1="92" y1="716.6" x2="1121" y2="716.6" stroke="#c6c8cc" stroke-width="1.3" stroke-dasharray="8 6 2 6"/>
<rect x="38" y="709.5" width="53.7" height="19.3" fill="#424a5a"/>
<text x="44.60" y="723" font-size="17" fill="#f0f0f2" font-weight="normal" textLength="41.03" lengthAdjust="spacingAndGlyphs" stroke="#f0f0f2" stroke-width="0.25" >37.94</text>
<rect x="1121.6" y="709.5" width="54.1" height="19.3" fill="#424a5a"/>
<text x="1128.50" y="723" font-size="17" fill="#f0f0f2" font-weight="normal" textLength="40.62" lengthAdjust="spacingAndGlyphs" stroke="#f0f0f2" stroke-width="0.25" >37.94</text>
<text x="113.90" y="732" font-size="16" fill="#e8e8ea" font-weight="normal" textLength="47.60" lengthAdjust="spacingAndGlyphs" stroke="#e8e8ea" stroke-width="0.25" >成交量</text>
<text x="173.00" y="732" font-size="16" fill="#e0566a" font-weight="normal" textLength="86.85" lengthAdjust="spacingAndGlyphs" stroke="#e0566a" stroke-width="0.25" >VOL: 13.070</text>
<text x="69.00" y="787.5" font-size="16" fill="#b5b9c1" font-weight="normal" textLength="15.20" lengthAdjust="spacingAndGlyphs" stroke="#b5b9c1" stroke-width="0.25" >亿</text>
<text x="1129.60" y="787.5" font-size="16" fill="#b5b9c1" font-weight="normal" textLength="14.10" lengthAdjust="spacingAndGlyphs" stroke="#b5b9c1" stroke-width="0.25" >亿</text>
<rect x="93.00" y="769.6" width="7" height="21.40" fill="#00a555"/>
<rect x="102.45" y="765.6" width="7" height="25.40" fill="#00a555"/>
<rect x="111.90" y="766.6" width="7" height="24.40" fill="#00a555"/>
<rect x="121.35" y="768.6" width="7" height="22.40" fill="#e42a44"/>
<rect x="130.80" y="770.0" width="7" height="21.00" fill="#00a555"/>
<rect x="140.25" y="773.0" width="7" height="18.00" fill="#e42a44"/>
<rect x="149.70" y="773.6" width="7" height="17.40" fill="#e42a44"/>
<rect x="159.15" y="766.4" width="7" height="24.60" fill="#00a555"/>
<rect x="168.60" y="764.4" width="7" height="26.60" fill="#e42a44"/>
<rect x="178.05" y="750.4" width="7" height="40.60" fill="#e42a44"/>
<rect x="187.50" y="769.0" width="7" height="22.00" fill="#00a555"/>
<rect x="196.95" y="769.0" width="7" height="22.00" fill="#00a555"/>
<rect x="206.40" y="769.6" width="7" height="21.40" fill="#e42a44"/>
<rect x="215.85" y="768.0" width="7" height="23.00" fill="#00a555"/>
<rect x="225.30" y="771.0" width="7" height="20.00" fill="#e42a44"/>
<rect x="234.75" y="773.6" width="7" height="17.40" fill="#e42a44"/>
<rect x="244.20" y="769.6" width="7" height="21.40" fill="#00a555"/>
<rect x="253.65" y="769.0" width="7" height="22.00" fill="#00a555"/>
<rect x="263.10" y="770.0" width="7" height="21.00" fill="#00a555"/>
<rect x="272.55" y="762.4" width="7" height="28.60" fill="#00a555"/>
<rect x="282.00" y="769.6" width="7" height="21.40" fill="#e42a44"/>
<rect x="291.45" y="770.0" width="7" height="21.00" fill="#e42a44"/>
<rect x="300.90" y="768.6" width="7" height="22.40" fill="#e42a44"/>
<rect x="310.35" y="773.0" width="7" height="18.00" fill="#00a555"/>
<rect x="319.80" y="754.4" width="7" height="36.60" fill="#00a555"/>
<rect x="329.25" y="771.6" width="7" height="19.40" fill="#e42a44"/>
<rect x="338.70" y="770.6" width="7" height="20.40" fill="#e42a44"/>
<rect x="348.15" y="770.4" width="7" height="20.60" fill="#e42a44"/>
<rect x="357.60" y="766.0" width="7" height="25.00" fill="#e42a44"/>
<rect x="367.05" y="759.6" width="7" height="31.40" fill="#e42a44"/>
<rect x="376.50" y="762.4" width="7" height="28.60" fill="#00a555"/>
<rect x="385.95" y="766.0" width="7" height="25.00" fill="#00a555"/>
<rect x="395.40" y="765.6" width="7" height="25.40" fill="#e42a44"/>
<rect x="404.85" y="764.0" width="7" height="27.00" fill="#00a555"/>
<rect x="414.30" y="771.6" width="7" height="19.40" fill="#00a555"/>
<rect x="423.75" y="772.0" width="7" height="19.00" fill="#00a555"/>
<rect x="433.20" y="764.0" width="7" height="27.00" fill="#e42a44"/>
<rect x="442.65" y="765.0" width="7" height="26.00" fill="#00a555"/>
<rect x="452.10" y="765.0" width="7" height="26.00" fill="#00a555"/>
<rect x="461.55" y="768.0" width="7" height="23.00" fill="#00a555"/>
<rect x="471.00" y="772.6" width="7" height="18.40" fill="#e42a44"/>
<rect x="480.45" y="771.0" width="7" height="20.00" fill="#e42a44"/>
<rect x="489.90" y="771.6" width="7" height="19.40" fill="#00a555"/>
<rect x="499.35" y="770.6" width="7" height="20.40" fill="#e42a44"/>
<rect x="508.80" y="772.4" width="7" height="18.60" fill="#00a555"/>
<rect x="518.25" y="768.6" width="7" height="22.40" fill="#00a555"/>
<rect x="527.70" y="747.6" width="7" height="43.40" fill="#e42a44"/>
<rect x="537.15" y="761.0" width="7" height="30.00" fill="#e42a44"/>
<rect x="546.60" y="767.6" width="7" height="23.40" fill="#00a555"/>
<rect x="556.05" y="769.6" width="7" height="21.40" fill="#00a555"/>
<rect x="565.50" y="770.6" width="7" height="20.40" fill="#00a555"/>
<rect x="574.95" y="766.0" width="7" height="25.00" fill="#00a555"/>
<rect x="584.40" y="764.0" width="7" height="27.00" fill="#e42a44"/>
<rect x="593.85" y="761.4" width="7" height="29.60" fill="#00a555"/>
<rect x="603.30" y="765.0" width="7" height="26.00" fill="#e42a44"/>
<rect x="612.75" y="762.0" width="7" height="29.00" fill="#e42a44"/>
<rect x="622.20" y="762.0" width="7" height="29.00" fill="#e42a44"/>
<rect x="631.65" y="760.0" width="7" height="31.00" fill="#e42a44"/>
<rect x="641.10" y="754.6" width="7" height="36.40" fill="#e42a44"/>
<rect x="650.55" y="756.0" width="7" height="35.00" fill="#e42a44"/>
<rect x="660.00" y="760.0" width="7" height="31.00" fill="#e42a44"/>
<rect x="669.45" y="765.6" width="7" height="25.40" fill="#00a555"/>
<rect x="678.90" y="764.0" width="7" height="27.00" fill="#e42a44"/>
<rect x="688.35" y="766.0" width="7" height="25.00" fill="#e42a44"/>
<rect x="697.80" y="767.6" width="7" height="23.40" fill="#00a555"/>
<rect x="707.25" y="767.6" width="7" height="23.40" fill="#00a555"/>
<rect x="716.70" y="770.0" width="7" height="21.00" fill="#00a555"/>
<rect x="726.15" y="771.4" width="7" height="19.60" fill="#e42a44"/>
<rect x="735.60" y="770.0" width="7" height="21.00" fill="#00a555"/>
<rect x="745.05" y="758.6" width="7" height="32.40" fill="#00a555"/>
<rect x="754.50" y="769.4" width="7" height="21.60" fill="#e42a44"/>
<rect x="763.95" y="768.4" width="7" height="22.60" fill="#e42a44"/>
<rect x="773.40" y="768.0" width="7" height="23.00" fill="#00a555"/>
<rect x="782.85" y="771.6" width="7" height="19.40" fill="#00a555"/>
<rect x="792.30" y="770.6" width="7" height="20.40" fill="#e42a44"/>
<rect x="801.75" y="765.0" width="7" height="26.00" fill="#00a555"/>
<rect x="811.20" y="769.0" width="7" height="22.00" fill="#e42a44"/>
<rect x="820.65" y="767.6" width="7" height="23.40" fill="#e42a44"/>
<rect x="830.10" y="768.0" width="7" height="23.00" fill="#e42a44"/>
<rect x="839.55" y="768.0" width="7" height="23.00" fill="#00a555"/>
<rect x="849.00" y="768.0" width="7" height="23.00" fill="#e42a44"/>
<rect x="858.45" y="769.6" width="7" height="21.40" fill="#e42a44"/>
<rect x="867.90" y="766.0" width="7" height="25.00" fill="#00a555"/>
<rect x="877.35" y="769.0" width="7" height="22.00" fill="#00a555"/>
<rect x="886.80" y="770.0" width="7" height="21.00" fill="#e42a44"/>
<rect x="896.25" y="768.0" width="7" height="23.00" fill="#e42a44"/>
<rect x="905.70" y="749.6" width="7" height="41.40" fill="#00a555"/>
<rect x="915.15" y="767.6" width="7" height="23.40" fill="#e42a44"/>
<rect x="924.60" y="764.6" width="7" height="26.40" fill="#e42a44"/>
<rect x="934.05" y="765.6" width="7" height="25.40" fill="#e42a44"/>
<rect x="943.50" y="761.6" width="7" height="29.40" fill="#00a555"/>
<rect x="952.95" y="765.0" width="7" height="26.00" fill="#00a555"/>
<rect x="962.40" y="764.0" width="7" height="27.00" fill="#00a555"/>
<rect x="971.85" y="763.6" width="7" height="27.40" fill="#00a555"/>
<rect x="981.30" y="765.0" width="7" height="26.00" fill="#e42a44"/>
<rect x="990.75" y="767.6" width="7" height="23.40" fill="#e42a44"/>
<rect x="1000.20" y="755.6" width="7" height="35.40" fill="#e42a44"/>
<rect x="1009.65" y="760.4" width="7" height="30.60" fill="#00a555"/>
<rect x="1019.10" y="762.8" width="7" height="28.20" fill="#00a555"/>
<rect x="1028.55" y="772.0" width="7" height="19.00" fill="#e42a44"/>
<rect x="110" y="798" width="285" height="26" fill="#121317"/>
<text x="113.00" y="814.2" font-size="16" fill="#eeeeee" font-weight="normal" textLength="24.11" lengthAdjust="spacingAndGlyphs" stroke="#eeeeee" stroke-width="0.25" >RSI</text>
<text x="148.33" y="814.2" font-size="16" fill="#e8913a" font-weight="normal" textLength="90.77" lengthAdjust="spacingAndGlyphs" stroke="#e8913a" stroke-width="0.25" >RSI1: 59.080</text>
<text x="250.52" y="814.2" font-size="16" fill="#2ea3dc" font-weight="normal" textLength="91.17" lengthAdjust="spacingAndGlyphs" stroke="#2ea3dc" stroke-width="0.25" >RSI2: 60.894</text>
<text x="353.79" y="814.2" font-size="16" fill="#4d4352" font-weight="normal" textLength="36.44" lengthAdjust="spacingAndGlyphs" stroke="#4d4352" stroke-width="0.25" >RSI3:</text>
<line x1="92" y1="861" x2="1121" y2="861" stroke="#2e3035" stroke-width="1.2" stroke-dasharray="3 2.5"/>
<text x="44.30" y="867.5" font-size="16" fill="#b5b9c1" font-weight="normal" textLength="39.94" lengthAdjust="spacingAndGlyphs" stroke="#b5b9c1" stroke-width="0.25" >50.00</text>
<text x="1128.51" y="868" font-size="16" fill="#b5b9c1" font-weight="normal" textLength="39.53" lengthAdjust="spacingAndGlyphs" stroke="#b5b9c1" stroke-width="0.25" >50.00</text>
<polyline points="92,859.83 96.50,860.00 105.95,860.33 115.40,860.67 124.85,861.00 134.30,860.40 143.75,859.80 153.20,859.20 162.65,858.60 172.10,858.00 181.55,859.00 191.00,860.00 200.45,859.71 209.90,859.43 219.35,859.14 228.80,858.86 238.25,858.57 247.70,858.29 257.15,858.00 266.60,858.50 276.05,859.00 285.50,858.33 294.95,857.67 304.40,857.00 313.85,857.50 323.30,858.00 332.75,858.60 342.20,857.73 351.65,856.87 361.10,856.00 370.55,855.30 380.00,854.60 389.45,855.30 398.90,856.00 408.35,856.20 417.80,856.40 427.25,856.60 436.70,856.68 446.15,856.76 455.60,856.84 465.05,856.92 474.50,857.00 483.95,856.80 493.40,856.60 502.85,856.40 512.30,856.20 521.75,856.00 531.20,853.40 540.65,852.00 550.10,853.00 559.55,854.00 569.00,855.00 578.45,854.80 587.90,854.60 597.35,855.80 606.80,857.00 616.25,856.50 625.70,856.00 635.15,855.00 644.60,854.00 654.05,852.50 663.50,851.00 672.95,853.00 682.40,852.00 691.85,851.00 701.30,852.00 710.75,853.00 720.20,853.80 729.65,854.60 739.10,854.60 748.55,854.60 758.00,854.60 767.45,854.60 776.90,854.60 786.35,856.00 795.80,856.30 805.25,856.60 814.70,855.30 824.15,854.00 833.60,853.50 843.05,853.00 852.50,852.47 861.95,851.93 871.40,851.40 880.85,851.13 890.30,850.87 899.75,850.60 909.20,850.60 918.65,850.60 928.10,850.60 937.55,850.60 947.00,851.60 956.45,852.60 965.90,853.30 975.35,854.00 984.80,852.50 994.25,851.00 1003.70,848.60 1013.15,848.60 1022.60,848.80 1032.05,848.00" fill="none" stroke="#2b9ed6" stroke-width="1.7" stroke-linejoin="round"/>
<polyline points="92,852.70 96.50,853.00 105.95,853.60 115.40,855.00 124.85,858.00 134.30,856.40 143.75,854.40 153.20,853.00 162.65,853.00 172.10,848.60 181.55,853.00 191.00,858.00 200.45,858.00 209.90,856.00 219.35,857.60 228.80,856.00 238.25,854.00 247.70,852.60 257.15,851.00 266.60,854.60 276.05,858.00 285.50,854.00 294.95,852.60 304.40,850.00 313.85,854.60 323.30,855.30 332.75,856.00 342.20,852.00 351.65,851.00 361.10,846.60 370.55,844.00 380.00,842.60 389.45,849.00 398.90,851.00 408.35,851.00 417.80,850.60 427.25,854.00 436.70,853.00 446.15,851.60 455.60,854.00 465.05,855.00 474.50,856.60 483.95,854.60 493.40,854.60 502.85,852.00 512.30,853.00 521.75,854.00 531.20,843.40 540.65,840.60 550.10,845.00 559.55,850.60 569.00,854.60 578.45,855.00 587.90,851.40 597.35,854.00 606.80,860.00 616.25,858.00 625.70,856.00 635.15,854.00 644.60,849.00 654.05,845.00 663.50,842.60 672.95,849.00 682.40,846.00 691.85,844.60 701.30,846.00 710.75,852.00 720.20,854.00 729.65,854.60 739.10,854.00 748.55,857.00 758.00,856.60 767.45,854.60 776.90,855.40 786.35,860.00 795.80,859.40 805.25,862.00 814.70,857.60 824.15,854.60 833.60,850.60 843.05,852.00 852.50,850.00 861.95,848.00 871.40,846.00 880.85,845.40 890.30,846.00 899.75,844.40 909.20,847.00 918.65,845.00 928.10,844.60 937.55,844.00 947.00,848.60 956.45,851.40 965.90,853.00 975.35,857.40 984.80,854.60 994.25,850.00 1003.70,842.00 1013.15,842.00 1022.60,843.20 1032.05,841.20" fill="none" stroke="#e8913a" stroke-width="1.5" stroke-linejoin="round"/>
<line x1="984.6" y1="709" x2="984.6" y2="874" stroke="#c6c8cc" stroke-width="1.3" stroke-dasharray="8 6 2 6"/>
<text x="160.50" y="896" font-size="16" fill="#b5b9c1" font-weight="normal" textLength="60.59" lengthAdjust="spacingAndGlyphs" stroke="#b5b9c1" stroke-width="0.25" >2025/06</text>
<text x="390.00" y="896" font-size="16" fill="#b5b9c1" font-weight="normal" textLength="17.30" lengthAdjust="spacingAndGlyphs" stroke="#b5b9c1" stroke-width="0.25" >07</text>
<text x="598.00" y="896" font-size="16" fill="#b5b9c1" font-weight="normal" textLength="16.81" lengthAdjust="spacingAndGlyphs" stroke="#b5b9c1" stroke-width="0.25" >08</text>
<text x="787.00" y="896" font-size="16" fill="#b5b9c1" font-weight="normal" textLength="16.56" lengthAdjust="spacingAndGlyphs" stroke="#b5b9c1" stroke-width="0.25" >09</text>
<rect x="908.7" y="878.7" width="152" height="20" fill="#4a5162"/>
<text x="915.8" y="896.5" font-size="16.5" fill="#f2f2f4" text-anchor="start" font-weight="normal" >2025/10/02 星期四</text>
</svg></body></html>
